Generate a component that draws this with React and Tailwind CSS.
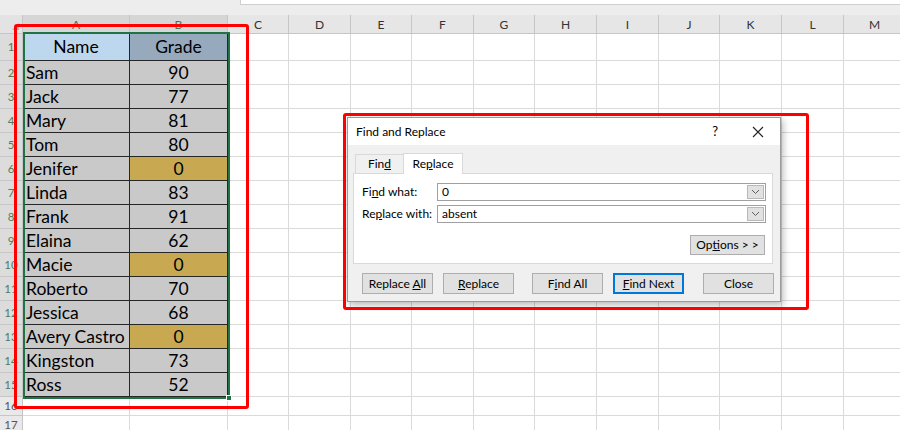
import React from "react";

const data = [
  ["Sam", 90], ["Jack", 77], ["Mary", 81], ["Tom", 80], ["Jenifer", 0],
  ["Linda", 83], ["Frank", 91], ["Elaina", 62], ["Macie", 0], ["Roberto", 70],
  ["Jessica", 68], ["Avery Castro", 0], ["Kingston", 73], ["Ross", 52],
];

const otherCols = [
  { l: "C", w: "w-[61px]" }, { l: "D", w: "w-[62px]" }, { l: "E", w: "w-[61px]" },
  { l: "F", w: "w-[62px]" }, { l: "G", w: "w-[61px]" }, { l: "H", w: "w-[62px]" },
  { l: "I", w: "w-[62px]" }, { l: "J", w: "w-[61px]" }, { l: "K", w: "w-[62px]" },
  { l: "L", w: "w-[62px]" }, { l: "M", w: "w-[62px]" },
];

function EmptyCells() {
  return otherCols.map((c) => (
    <div key={c.l} className={`${c.w} shrink-0 border-r border-b border-[#dadada] bg-white`} />
  ));
}

function RowHead({ n, sel }) {
  return (
    <div
      className={`w-[23px] shrink-0 flex items-center justify-center border-r border-b border-[#c6c6c6] text-[11.5px] ${
        sel ? "bg-[#dcdcdc] text-[#4e7d5b]" : "bg-[#e9e9e9] text-[#555]"
      }`}
    >
      {n}
    </div>
  );
}

function Chevron() {
  return (
    <svg width="9" height="6" viewBox="0 0 9 6" fill="none">
      <path d="M1 1L4.5 4.5L8 1" stroke="#606060" strokeWidth="1" />
    </svg>
  );
}

function Field({ value }) {
  return (
    <div className="w-[329px] h-[18px] border border-[#a0a0a0] bg-white flex items-stretch">
      <div className="flex-1 flex items-center pl-[4px] text-[12px] text-black">{value}</div>
      <div className="w-[17px] m-[1px] bg-[#e1e1e1] border border-[#b9b9b9] flex items-center justify-center">
        <Chevron />
      </div>
    </div>
  );
}

function Btn({ children, cls, focus }) {
  return (
    <div
      className={`${cls} w-[71px] h-[21px] shrink-0 flex items-center justify-center text-[12px] text-black bg-[#e1e1e1] border ${
        focus ? "border-[#0078d7] shadow-[inset_0_0_0_1px_#0078d7]" : "border-[#adadad]"
      }`}
    >
      <span className="whitespace-pre">{children}</span>
    </div>
  );
}

export default function App() {
  return (
    <div className="relative w-[900px] h-[430px] overflow-hidden bg-white font-['Lato',sans-serif]">
      {/* top strip with formula bar edge */}
      <div className="h-[15px] bg-[#ededed] flex">
        <div className="w-[240px] shrink-0" />
        <div className="flex-1 h-[5px] bg-white border-l border-b border-[#cfcfcf]" />
      </div>

      {/* column headers */}
      <div className="flex h-[19px] text-[12px]">
        <div className="w-[23px] shrink-0 bg-[#e3e3e3] border-r border-b border-[#c6c6c6] flex items-end justify-end pr-[3px] pb-[3px]">
          <svg width="7" height="7" viewBox="0 0 7 7">
            <path d="M7 0V7H0Z" fill="#b4b4b4" />
          </svg>
        </div>
        <div className="w-[107px] shrink-0 bg-[#d6d6d6] border-r border-b border-[#c6c6c6] flex items-center justify-center pt-[1px] text-[#3f7a52]">A</div>
        <div className="w-[98px] shrink-0 bg-[#d6d6d6] border-r border-b border-[#c6c6c6] flex items-center justify-center pt-[1px] text-[#3f7a52]">B</div>
        {otherCols.map((c) => (
          <div key={c.l} className={`${c.w} shrink-0 bg-[#e6e6e6] border-r border-b border-[#c6c6c6] flex items-center justify-center pt-[1px] text-[#333]`}>
            {c.l}
          </div>
        ))}
      </div>

      {/* row 1 */}
      <div className="flex h-[27px] text-[17.5px] text-black">
        <RowHead n={1} sel />
        <div className="w-[107px] shrink-0 bg-[#bdd7ee] border-r border-b border-[#262626] flex items-center justify-center pt-[1px]">Name</div>
        <div className="w-[98px] shrink-0 bg-[#97aabd] border-r border-b border-[#262626] flex items-center justify-center pt-[1px]">Grade</div>
        <EmptyCells />
      </div>

      {data.map(([name, grade], i) => (
        <div key={name} className="flex h-[24px] text-[17.5px] text-black">
          <RowHead n={i + 2} sel />
          <div className="w-[107px] shrink-0 bg-[#c9c9c9] border-r border-b border-[#262626] flex items-center pl-[3px] pt-[1px]">{name}</div>
          <div
            className={`w-[98px] shrink-0 border-r border-b border-[#262626] flex items-center justify-center pt-[1px] ${
              grade === 0 ? "bg-[#c8a952]" : "bg-[#c9c9c9]"
            }`}
          >
            {grade}
          </div>
          <EmptyCells />
        </div>
      ))}

      {[16, 17].map((n) => (
        <div key={n} className="flex h-[19px]">
          <RowHead n={n} />
          <div className="w-[107px] shrink-0 border-r border-b border-[#dadada]" />
          <div className="w-[98px] shrink-0 border-r border-b border-[#dadada]" />
          <EmptyCells />
        </div>
      ))}

      {/* selection border */}
      <div className="absolute left-[23px] top-[32px] w-[207px] h-[367px] border-2 border-[#217346]" />
      <div className="absolute left-[226px] top-[395px] w-[6px] h-[6px] bg-[#217346] border border-white" />

      {/* red highlight around data */}
      <div className="absolute left-[14px] top-[24px] w-[235px] h-[385px] border-[3px] border-[#ff0000] rounded-[3px]" />

      {/* Find and Replace dialog */}
      <div className="absolute left-[347px] top-[117px] w-[434px] h-[185px] border border-[#9a9a9a] bg-[#f0f0f0] shadow-[2px_3px_7px_rgba(0,0,0,0.28)] flex flex-col text-[12px] text-black">
        <div className="h-[27px] bg-white flex items-center pl-[8px] pr-[16px] shrink-0">
          <span className="flex-1">Find and Replace</span>
          <span className="mr-[34px] text-[13px]">?</span>
          <svg width="12" height="12" viewBox="0 0 12 12">
            <path d="M1 1L11 11M11 1L1 11" stroke="#222" strokeWidth="1.1" />
          </svg>
        </div>
        <div className="flex-1 flex flex-col pl-[5px]">
          <div className="h-[28px] flex items-end pl-[2px] pt-[8px]">
            <div className="w-[48px] h-[19px] border border-b-0 border-r-0 border-[#d9d9d9] bg-[#f0f0f0] flex items-center justify-center">
              <span>Fin<span className="underline">d</span></span>
            </div>
            <div className="relative z-10 -mb-[1px] w-[60px] h-[21px] border border-b-0 border-[#d9d9d9] bg-white flex items-center justify-center">
              <span>Re<span className="underline">p</span>lace</span>
            </div>
          </div>
          <div className="w-[420px] h-[91px] border border-[#d9d9d9] bg-white flex flex-col pl-[8px] pt-[9px] pr-[6px]">
            <div className="flex items-center">
              <div className="w-[75px] shrink-0">
                Fi<span className="underline">n</span>d what:
              </div>
              <Field value="0" />
            </div>
            <div className="flex items-center mt-[4px]">
              <div className="w-[75px] shrink-0">
                Re<span className="underline">p</span>lace with:
              </div>
              <Field value="absent" />
            </div>
            <div className="flex justify-end mt-[12px] pr-[1px]">
              <div className="w-[75px] h-[20px] bg-[#e1e1e1] border border-[#adadad] flex items-center justify-center">
                <span className="whitespace-pre">Op<span className="underline">t</span>ions &gt; &gt;</span>
              </div>
            </div>
          </div>
          <div className="flex mt-[9px]">
            <Btn cls="ml-[9px]">Replace <span className="underline">A</span>ll</Btn>
            <Btn cls="ml-[10px]"><span className="underline">R</span>eplace</Btn>
            <Btn cls="ml-[18px]">F<span className="underline">i</span>nd All</Btn>
            <Btn cls="ml-[10px]" focus><span className="underline">F</span>ind Next</Btn>
            <Btn cls="ml-[19px]">Close</Btn>
          </div>
        </div>
      </div>

      {/* red highlight around dialog */}
      <div className="absolute left-[343px] top-[113px] w-[466px] h-[197px] border-[3px] border-[#ff0000] rounded-[3px]" />
    </div>
  );
}
